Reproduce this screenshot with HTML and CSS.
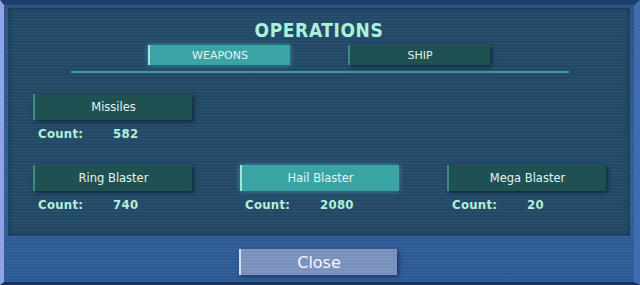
FILE: index.html
```html
<!DOCTYPE html>
<html lang="en">
  <head>
    <meta charset="UTF-8" />
    <title>Operations</title>
    <link rel="stylesheet" href="styles.css">
  </head>
  <body>
    <div class="screen">
      <main class="panel">
        <h1 class="title">OPERATIONS</h1>

        <!-- Tabs -->
        <nav class="tabs">
          <button class="btn tab active">WEAPONS</button>
          <button class="btn tab">SHIP</button>
        </nav>
        <div class="divider"></div>

        <!-- Weapons -->
        <section class="weapons">
          <div class="weapon">
            <button class="btn">Missiles</button>
            <div class="count"><span class="label">Count:</span><span>582</span></div>
          </div>
          <div class="weapon"></div>
          <div class="weapon"></div>

          <div class="weapon">
            <button class="btn">Ring Blaster</button>
            <div class="count"><span class="label">Count:</span><span>740</span></div>
          </div>
          <div class="weapon">
            <button class="btn active">Hail Blaster</button>
            <div class="count"><span class="label">Count:</span><span>2080</span></div>
          </div>
          <div class="weapon">
            <button class="btn">Mega Blaster</button>
            <div class="count"><span class="label">Count:</span><span>20</span></div>
          </div>
        </section>
      </main>

      <footer class="footer">
        <button class="btn close">Close</button>
      </footer>
    </div>
  </body>
</html>
```

FILE: styles.css
```css
html,
body {
  margin: 0;
  padding: 0;
  width: 640px;
  height: 285px;
  overflow: hidden;
  font-family: "DejaVu Sans", "Liberation Sans", sans-serif;
}

.screen {
  width: 640px;
  height: 285px;
  box-sizing: border-box;
  padding: 3px 4px 0 4px;
  background:
    repeating-linear-gradient(0deg, rgba(255, 255, 255, 0.05) 0 1px, transparent 1px 3px),
    linear-gradient(180deg, #2a5488 0%, #2e5d96 60%, #2c5a95 100%);
  border-top: 5px solid #1f3e6e;
  border-bottom: 3px solid #1a2f5a;
  border-left: 4px solid #8ea4e6;
  border-right: 6px solid #3f6cb0;
}

.panel {
  height: 228px;
  box-sizing: border-box;
  padding-top: 10px;
  background:
    repeating-linear-gradient(0deg, rgba(255, 255, 255, 0.03) 0 1px, transparent 1px 3px),
    #224a68;
  box-shadow: inset 0 0 6px rgba(10, 30, 50, 0.5);
}

.title {
  margin: 0;
  text-align: center;
  font-size: 19px;
  font-weight: bold;
  font-stretch: condensed;
  letter-spacing: 0.6px;
  color: #aaf2da;
  line-height: 24px;
}

.tabs {
  display: flex;
  justify-content: center;
  gap: 58px;
  margin-top: 3px;
}

.btn {
  font-family: "DejaVu Sans", "Liberation Sans", sans-serif;
  font-size: 11px;
  color: #e6f4f2;
  background: #1f5052;
  border: none;
  border-left: 2px solid #3c8a84;
  height: 20px;
  padding: 0;
  box-shadow: 2px 2px 4px rgba(8, 20, 30, 0.6);
  cursor: pointer;
}

.btn.active {
  background: #3aa3a3;
  border-left-color: #9ee6e0;
  box-shadow: 0 0 5px rgba(110, 220, 230, 0.45);
}

.tab {
  width: 142px;
}

.divider {
  margin: 6px 0 0 63px;
  width: 498px;
  height: 2px;
  background: #3b9a9c;
}

.weapons {
  display: grid;
  grid-template-columns: repeat(3, 207px);
  grid-template-rows: 71px 50px;
  padding-left: 25px;
  margin-top: 21px;
}

.weapon .btn {
  width: 159px;
  height: 26px;
  font-size: 11.5px;
}

.count {
  display: flex;
  margin: 6px 0 0 5px;
  font-size: 13px;
  font-weight: bold;
  font-stretch: semi-condensed;
  color: #b4f0d6;
  letter-spacing: 0.3px;
}

.count .label {
  width: 75px;
}

.footer {
  display: flex;
  justify-content: center;
  padding-top: 13px;
  padding-right: 2px;
}

.close {
  width: 158px;
  height: 26px;
  font-size: 16px;
  color: #f4f6ff;
  background:
    repeating-linear-gradient(0deg, rgba(255, 255, 255, 0.06) 0 1px, transparent 1px 3px),
    #7a90bc;
  border-left: 2px solid #d4dcf6;
  box-shadow: 2px 2px 4px rgba(20, 30, 70, 0.6);
}
```
